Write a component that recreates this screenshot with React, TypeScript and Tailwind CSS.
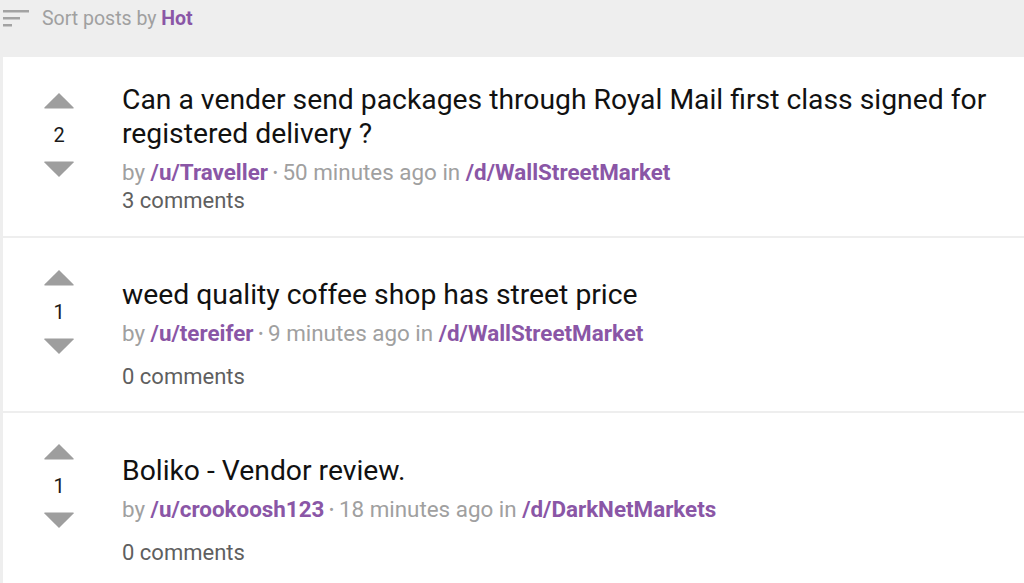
import { ReactNode } from 'react';

interface Post {
  score: number;
  title: ReactNode;
  user: string;
  ago: string;
  board: string;
  comments: number;
  rowClass: string;
  voteTop: string;
  commentsGap: string;
}

const posts: Post[] = [
  {
    score: 2,
    title: (
      <>
        Can a vender send packages through Royal Mail first class signed for
        <br />
        registered delivery ?
      </>
    ),
    user: '/u/Traveller',
    ago: '50 minutes ago',
    board: '/d/WallStreetMarket',
    comments: 3,
    rowClass: 'h-[181px] pt-[26px]',
    voteTop: 'pt-[9px]',
    commentsGap: 'mt-0',
  },
  {
    score: 1,
    title: 'weed quality coffee shop has street price',
    user: '/u/tereifer',
    ago: '9 minutes ago',
    board: '/d/WallStreetMarket',
    comments: 0,
    rowClass: 'h-[175px] pt-[40px]',
    voteTop: '-mt-[9px]',
    commentsGap: 'mt-[15px]',
  },
  {
    score: 1,
    title: 'Boliko - Vendor review.',
    user: '/u/crookoosh123',
    ago: '18 minutes ago',
    board: '/d/DarkNetMarkets',
    comments: 0,
    rowClass: 'h-[172px] pt-[41px]',
    voteTop: '-mt-[11px]',
    commentsGap: 'mt-[15px]',
  },
];

function Arrow({ up }: { up: boolean }) {
  return (
    <svg width="32" height="17" viewBox="0 0 32 17" className="block">
      {up ? (
        <path d="M16 1 L30.6 15.6 Q31.2 16.5 30 16.5 L2 16.5 Q0.8 16.5 1.4 15.6 Z" fill="#9e9e9e" />
      ) : (
        <path d="M16 16 L30.6 1.4 Q31.2 0.5 30 0.5 L2 0.5 Q0.8 0.5 1.4 1.4 Z" fill="#9e9e9e" />
      )}
    </svg>
  );
}

function SortIcon() {
  return (
    <svg width="30" height="22" viewBox="0 0 30 22" className="block">
      <rect x="3" y="3" width="26" height="2.5" fill="#a3a3a3" />
      <rect x="3" y="10" width="17" height="2.5" fill="#a3a3a3" />
      <rect x="3" y="17" width="9" height="2.5" fill="#a3a3a3" />
    </svg>
  );
}

export default function App() {
  return (
    <div
      className="w-[1024px] h-[583px] overflow-hidden bg-[#eeeeee] pl-[3px]"
      style={{ fontFamily: 'Roboto, "Liberation Sans", sans-serif' }}
    >
      <div className="h-[57px] flex items-start pt-[7px] gap-[12px] -ml-[3px]">
        <SortIcon />
        <span className="text-[19.5px] leading-[24px] text-[#a0a0a0]">
          Sort posts by <span className="font-bold text-[#8a56a6]">Hot</span>
        </span>
      </div>
      <div className="bg-white">
        {posts.map((p, i) => (
          <div
            key={i}
            className={`flex items-start ${p.rowClass} ${i < posts.length - 1 ? 'border-b-2 border-[#eeeeee]' : ''}`}
          >
            <div className={`w-[119px] pl-[40px] shrink-0 ${p.voteTop}`}>
              <div className="w-[32px] flex flex-col items-center">
                <Arrow up />
                <div className="h-[52px] flex items-center justify-center text-[20px] text-[#1a1a1a]">
                  {p.score}
                </div>
                <Arrow up={false} />
              </div>
            </div>
            <div className="flex flex-col">
              <div className="text-[28.3px] leading-[34px] text-[#111]">{p.title}</div>
              <div className="text-[22.4px] leading-[27px] text-[#a0a0a0] mt-[8px] whitespace-nowrap">
                by <span className="font-bold text-[#8a56a6]">{p.user}</span>
                <span className="text-[15px] align-[2px] px-[1px]"> • </span>
                {p.ago} in <span className="font-bold text-[#8a56a6]">{p.board}</span>
              </div>
              <div className={`text-[22px] leading-[27px] text-[#5f5f5f] ${p.commentsGap}`}>
                {p.comments} comments
              </div>
            </div>
          </div>
        ))}
      </div>
    </div>
  );
}
